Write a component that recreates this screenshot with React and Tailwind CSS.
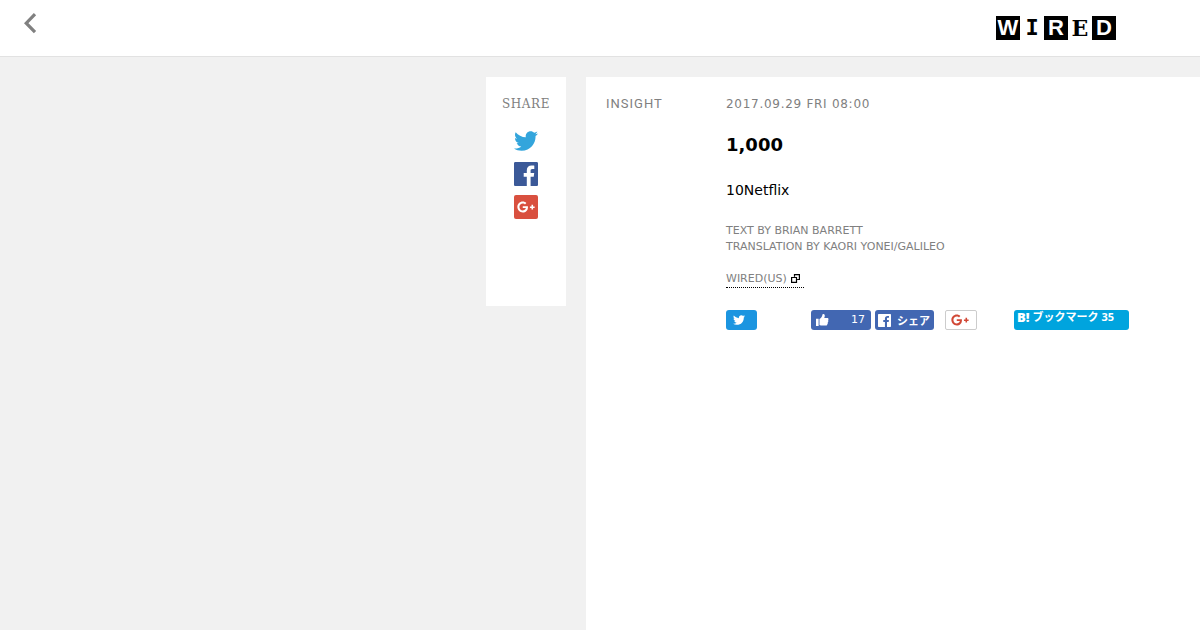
import { FaTwitter, FaGooglePlusG } from "react-icons/fa";

const LOGO = [
  { letter: "W", style: "bg-black text-white font-['Liberation_Sans']" },
  { letter: "I", style: "text-black font-['DejaVu_Sans_Mono']" },
  { letter: "R", style: "bg-black text-white font-['Liberation_Sans']" },
  { letter: "E", style: "text-black font-['DejaVu_Serif']" },
  { letter: "D", style: "bg-black text-white font-['Liberation_Sans']" },
];

function FacebookIcon({ className }) {
  return (
    <svg viewBox="0 0 24 24" className={className} fill="currentColor" aria-hidden="true">
      <path d="M22.7 0H1.3C.6 0 0 .6 0 1.3v21.4c0 .7.6 1.3 1.3 1.3h11.5v-9.3H9.7v-3.6h3.1V8.4c0-3.1 1.9-4.8 4.7-4.8 1.3 0 2.5.1 2.8.1V7h-1.9c-1.5 0-1.8.7-1.8 1.8v2.3h3.6l-.5 3.6h-3.1V24h6.1c.7 0 1.3-.6 1.3-1.3V1.3C24 .6 23.4 0 22.7 0z" />
    </svg>
  );
}

function LikeIcon() {
  return (
    <svg viewBox="0 0 14 14" className="size-[14px]" fill="currentColor" aria-hidden="true">
      <path d="M1 5.8h2.6V13H1zM4.5 6c1.6-.8 2.6-2.2 2.8-3.7.1-.9.5-1.3 1.1-1.3 1 0 1.4.8 1.4 1.8 0 .8-.3 1.6-.6 2.3h3c.8 0 1.3.5 1.3 1.1 0 .5-.2.8-.5 1 .3.2.4.5.4.9 0 .5-.3.9-.7 1.1.1.2.2.4.2.7 0 .5-.3.9-.7 1 .1.2.1.3.1.5 0 .7-.6 1.1-1.3 1.1H7.4c-1.2 0-2-.2-2.9-.6z" />
    </svg>
  );
}

function WindowIcon() {
  return (
    <svg viewBox="0 0 9 9" className="mb-px size-[9px]" fill="none" stroke="#000" strokeWidth="1.2" aria-hidden="true">
      <path d="M.6 3.5h4.9v4.9H.6zM3.5 2.8V.6h4.9v4.9H6.2" />
    </svg>
  );
}

function Header() {
  return (
    <header className="flex h-[57px] items-start justify-between border-b border-[#e2e2e2] bg-white pl-6 pr-[84px]">
      <button type="button" aria-label="Back" className="mt-3">
        <svg viewBox="0 0 13 22" className="h-[22px] w-[13px]" fill="none" stroke="#808080" strokeWidth="3.2">
          <path d="M11 2.2 2.2 11.2l8.8 9" />
        </svg>
      </button>
      <a href="#" aria-label="WIRED" className="mt-4 flex">
        {LOGO.map((tile) => (
          <span
            key={tile.letter}
            className={`flex size-6 items-center justify-center text-[22px] font-bold leading-6 ${tile.style}`}
          >
            {tile.letter}
          </span>
        ))}
      </a>
    </header>
  );
}

function ShareBar() {
  return (
    <aside className="flex h-[229px] w-20 shrink-0 flex-col items-center bg-white pt-[18px]">
      <h2 className="font-['DejaVu_Serif'] text-[12px] leading-[18px] tracking-wider text-[#808080]">SHARE</h2>
      <ul className="mt-4 flex flex-col gap-[9px]">
        <li>
          <a href="#" aria-label="Twitter" className="flex size-6 text-[#33a5dc]">
            <FaTwitter className="size-6" />
          </a>
        </li>
        <li>
          <a href="#" aria-label="Facebook" className="flex size-6 text-[#3b5998]">
            <FacebookIcon className="size-6" />
          </a>
        </li>
        <li>
          <a href="#" aria-label="Google+" className="flex size-6 items-center justify-center rounded-[2px] bg-[#d9503f] text-white">
            <FaGooglePlusG className="size-[18px]" />
          </a>
        </li>
      </ul>
    </aside>
  );
}

function SocialButtons() {
  return (
    <div className="mt-[22px] flex">
      <div className="w-[85px]">
        <button type="button" aria-label="Tweet" className="flex h-5 w-[31px] items-center rounded-[3px] bg-[#1b95e0] pl-[7px] text-white">
          <FaTwitter className="size-3" />
        </button>
      </div>
      <div className="flex w-[134px] gap-1">
        <button
          type="button"
          aria-label="Like"
          className="flex h-5 w-[60px] items-center justify-between rounded-[3px] bg-[#4267b2] pl-1 pr-[6px] text-[11px] text-white"
        >
          <LikeIcon />
          17
        </button>
        <button
          type="button"
          className="flex h-5 w-[59px] items-center gap-1.5 rounded-[3px] bg-[#4267b2] pl-[3px] font-['Noto_Sans_CJK_JP',sans-serif] text-[11px] font-bold text-white"
        >
          <FacebookIcon className="size-[13px] shrink-0" />
          <span className="whitespace-nowrap leading-4">シェア</span>
        </button>
      </div>
      <div className="w-[69px]">
        <button
          type="button"
          aria-label="Google+"
          className="flex h-5 w-8 items-center rounded-[2px] border border-[#ccc] bg-white pl-[5px] text-[#d14836]"
        >
          <FaGooglePlusG className="size-[18px]" />
        </button>
      </div>
      <a
        href="#"
        className="flex h-5 w-[115px] gap-[3px] whitespace-nowrap rounded-[3px] bg-[#00a4de] pl-[3px] text-[11px] font-bold leading-[14px] text-white"
      >
        <span className="font-['Open_Sans'] text-[13px] font-extrabold leading-[14px]">B!</span>
        <span className="font-['Open_Sans','Noto_Sans_CJK_JP',sans-serif]">ブックマーク 35</span>
      </a>
    </div>
  );
}

export default function App() {
  return (
    <div className="flex min-h-screen flex-col bg-[#f1f1f1] font-['DejaVu_Sans','Noto_Sans_CJK_JP',sans-serif] text-black">
      <Header />
      <main className="flex flex-1 items-start gap-5 pl-[40.5%] pt-5">
        <ShareBar />
        <article className="flex flex-1 self-stretch bg-white pl-5 pt-[18px]">
          <p className="w-[120px] shrink-0 font-['Roboto'] text-[13px] leading-[18px] tracking-[1px] text-[#808080]">
            INSIGHT
          </p>
          <div>
            <p className="text-[12px] leading-[18px] tracking-[0.06em] text-[#808080]">2017.09.29 FRI 08:00</p>
            <h1 className="mt-5 text-[18px] font-bold leading-6">1,000</h1>
            <p className="mt-6 text-[14px] leading-[18px]">10Netflix</p>
            <p className="mt-6 text-[11px] leading-4 text-[#808080]">
              TEXT BY BRIAN BARRETT
              <br />
              TRANSLATION BY KAORI YONEI/GALILEO
            </p>
            <div className="mt-4 flex">
              <a
                href="#"
                className="flex items-center gap-1 border-b border-dotted border-black pr-1 text-[11px] leading-4 text-[#808080]"
              >
                WIRED(US)
                <WindowIcon />
              </a>
            </div>
            <SocialButtons />
          </div>
        </article>
      </main>
    </div>
  );
}
